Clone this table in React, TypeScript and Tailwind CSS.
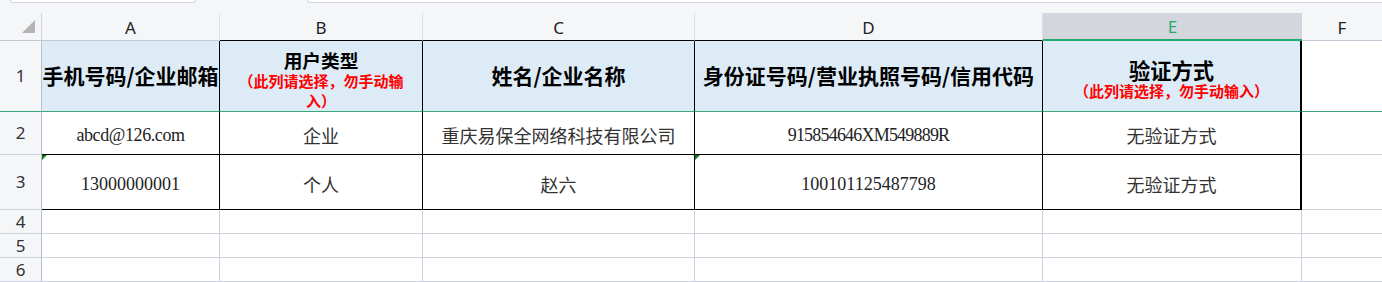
import React from "react";

const cjk = "font-['Noto_Sans_CJK_SC',sans-serif]";
const ui = "font-['Noto_Sans','Noto_Sans_CJK_SC',sans-serif]";
const serif = "font-['Liberation_Serif','Noto_Sans_CJK_SC',serif]";

function GreenMark() {
  return (
    <svg className="absolute left-0 top-0" width="5" height="5" viewBox="0 0 5 5">
      <polygon points="0,0 5,0 0,5" fill="#157a1c" />
    </svg>
  );
}

function RowHead({ n, green }: { n: string; green?: boolean }) {
  return (
    <div
      className={
        green
          ? `flex items-center justify-center border-r border-b border-r-[#b9bfcb] border-b-[#3ba57c] bg-[#f5f6f8] text-[17px] text-[#333] ${ui}`
          : `flex items-center justify-center border-r border-b border-r-[#b9bfcb] border-b-[#cdd1dc] bg-[#f5f6f8] text-[17px] text-[#333] ${ui}`
      }
    >
      {n}
    </div>
  );
}

function ColHead({ l, dark }: { l: string; dark?: boolean }) {
  return (
    <div
      className={
        dark
          ? `flex items-center justify-center pt-[2px] border-r border-b border-r-[#dcdfe5] border-b-black bg-[#f5f6f8] text-[17px] text-[#222] ${ui}`
          : `flex items-center justify-center pt-[2px] border-r border-b border-r-[#dcdfe5] border-b-[#c3c8d2] bg-[#f5f6f8] text-[17px] text-[#222] ${ui}`
      }
    >
      {l}
    </div>
  );
}

function EmptyRow({ n }: { n: string }) {
  return (
    <>
      <RowHead n={n} />
      <div className="border-r border-b border-[#cdd1dc]" />
      <div className="border-r border-b border-[#cdd1dc]" />
      <div className="border-r border-b border-[#cdd1dc]" />
      <div className="border-r border-b border-[#cdd1dc]" />
      <div className="border-r border-b border-[#cdd1dc]" />
      <div className="border-b border-[#cdd1dc]" />
    </>
  );
}

export default function App() {
  return (
    <div className="h-[282px] w-[1382px] overflow-hidden bg-white">
      <div className="flex h-[13px] bg-[#f5f6f8]">
        <div className="ml-[10px] h-[3px] w-[186px] rounded-b-[3px] border-x border-b border-[#d3d6dd] bg-white" />
        <div className="ml-[111px] h-[3px] flex-1 rounded-bl-[3px] border-l border-b border-[#d3d6dd] bg-white" />
      </div>
      <div className="grid grid-cols-[42px_178px_203px_272px_348px_259px_80px] grid-rows-[28px_71px_43px_55px_24px_24px_24px]">
        {/* header */}
        <div className="flex items-end justify-end pb-[7px] pr-[6px] border-r border-b border-r-[#d0d4db] border-b-[#c3c8d2] bg-[#f5f6f8]">
          <svg width="13" height="13" viewBox="0 0 13 13">
            <polygon points="13,0 13,13 0,13" fill="#b4b4b4" />
          </svg>
        </div>
        <ColHead l="A" />
        <ColHead l="B" dark />
        <ColHead l="C" dark />
        <ColHead l="D" dark />
        <div className={`flex items-center justify-center pt-[2px] border-b-2 border-b-[#1fab6f] bg-[#d3d6dd] text-[17px] text-[#1fab6f] ${ui}`}>
          E
        </div>
        <div className={`flex items-center justify-center pt-[2px] border-b border-b-[#c3c8d2] bg-[#f5f6f8] text-[17px] text-[#222] ${ui}`}>
          F
        </div>

        {/* row 1 */}
        <RowHead n="1" green />
        <div className={`flex items-center justify-center overflow-hidden whitespace-nowrap border-r border-b border-r-black border-b-[#3ba57c] bg-[#ddebf7] text-[21px] font-bold text-black ${cjk}`}>
          手机号码/企业邮箱
        </div>
        <div className={`flex flex-col items-center overflow-hidden pt-[7px] border-r border-b border-r-black border-b-[#3ba57c] bg-[#ddebf7] font-bold ${cjk}`}>
          <div className="text-[18.7px] leading-[23px] text-black">用户类型</div>
          <div className="text-[15px] leading-[20px] text-[#ff0000]">（此列请选择，勿手动输</div>
          <div className="text-[15px] leading-[20px] text-[#ff0000]">入）</div>
        </div>
        <div className={`flex items-center justify-center whitespace-nowrap border-r border-b border-r-black border-b-[#3ba57c] bg-[#ddebf7] text-[21px] font-bold text-black ${cjk}`}>
          姓名/企业名称
        </div>
        <div className={`flex items-center justify-center overflow-hidden whitespace-nowrap border-r border-b border-r-black border-b-[#3ba57c] bg-[#ddebf7] text-[21px] font-bold text-black ${cjk}`}>
          身份证号码/营业执照号码/信用代码
        </div>
        <div className={`flex flex-col items-center pt-[18px] border-r-2 border-b border-r-black border-b-[#3ba57c] bg-[#ddebf7] font-bold ${cjk}`}>
          <div className="text-[21.3px] leading-[22px] text-black">验证方式</div>
          <div className="text-[15px] leading-[20px] text-[#ff0000]">（此列请选择，勿手动输入）</div>
        </div>
        <div className="border-b border-b-[#3ba57c]" />

        {/* row 2 */}
        <RowHead n="2" />
        <div className={`flex items-center justify-center pt-[4px] border-r border-b border-black text-[18px] tracking-[-0.4px] text-[#222] ${serif}`}>
          abcd@126.com
        </div>
        <div className={`flex items-center justify-center pt-[4px] border-r border-b border-black text-[18px] text-[#333] ${cjk}`}>
          企业
        </div>
        <div className={`flex items-center justify-center pt-[4px] border-r border-b border-black text-[18px] text-[#333] ${cjk}`}>
          重庆易保全网络科技有限公司
        </div>
        <div className={`flex items-center justify-center pt-[4px] border-r border-b border-black text-[18px] tracking-[-0.8px] text-[#222] ${serif}`}>
          915854646XM549889R
        </div>
        <div className={`flex items-center justify-center pt-[4px] border-r-2 border-b border-black text-[18px] text-[#333] ${cjk}`}>
          无验证方式
        </div>
        <div className="border-b border-[#cdd1dc]" />

        {/* row 3 */}
        <RowHead n="3" />
        <div className={`relative flex items-center justify-center pt-[4px] border-r border-b border-black text-[18px] text-[#222] ${serif}`}>
          <GreenMark />
          13000000001
        </div>
        <div className={`flex items-center justify-center pt-[4px] border-r border-b border-black text-[18px] text-[#333] ${cjk}`}>
          个人
        </div>
        <div className={`flex items-center justify-center pt-[4px] border-r border-b border-black text-[18px] text-[#333] ${cjk}`}>
          赵六
        </div>
        <div className={`relative flex items-center justify-center pt-[4px] border-r border-b border-black text-[18px] text-[#222] ${serif}`}>
          <GreenMark />
          100101125487798
        </div>
        <div className={`flex items-center justify-center pt-[4px] border-r-2 border-b border-black text-[18px] text-[#333] ${cjk}`}>
          无验证方式
        </div>
        <div className="border-b border-[#cdd1dc]" />

        <EmptyRow n="4" />
        <EmptyRow n="5" />
        <EmptyRow n="6" />
      </div>
    </div>
  );
}
